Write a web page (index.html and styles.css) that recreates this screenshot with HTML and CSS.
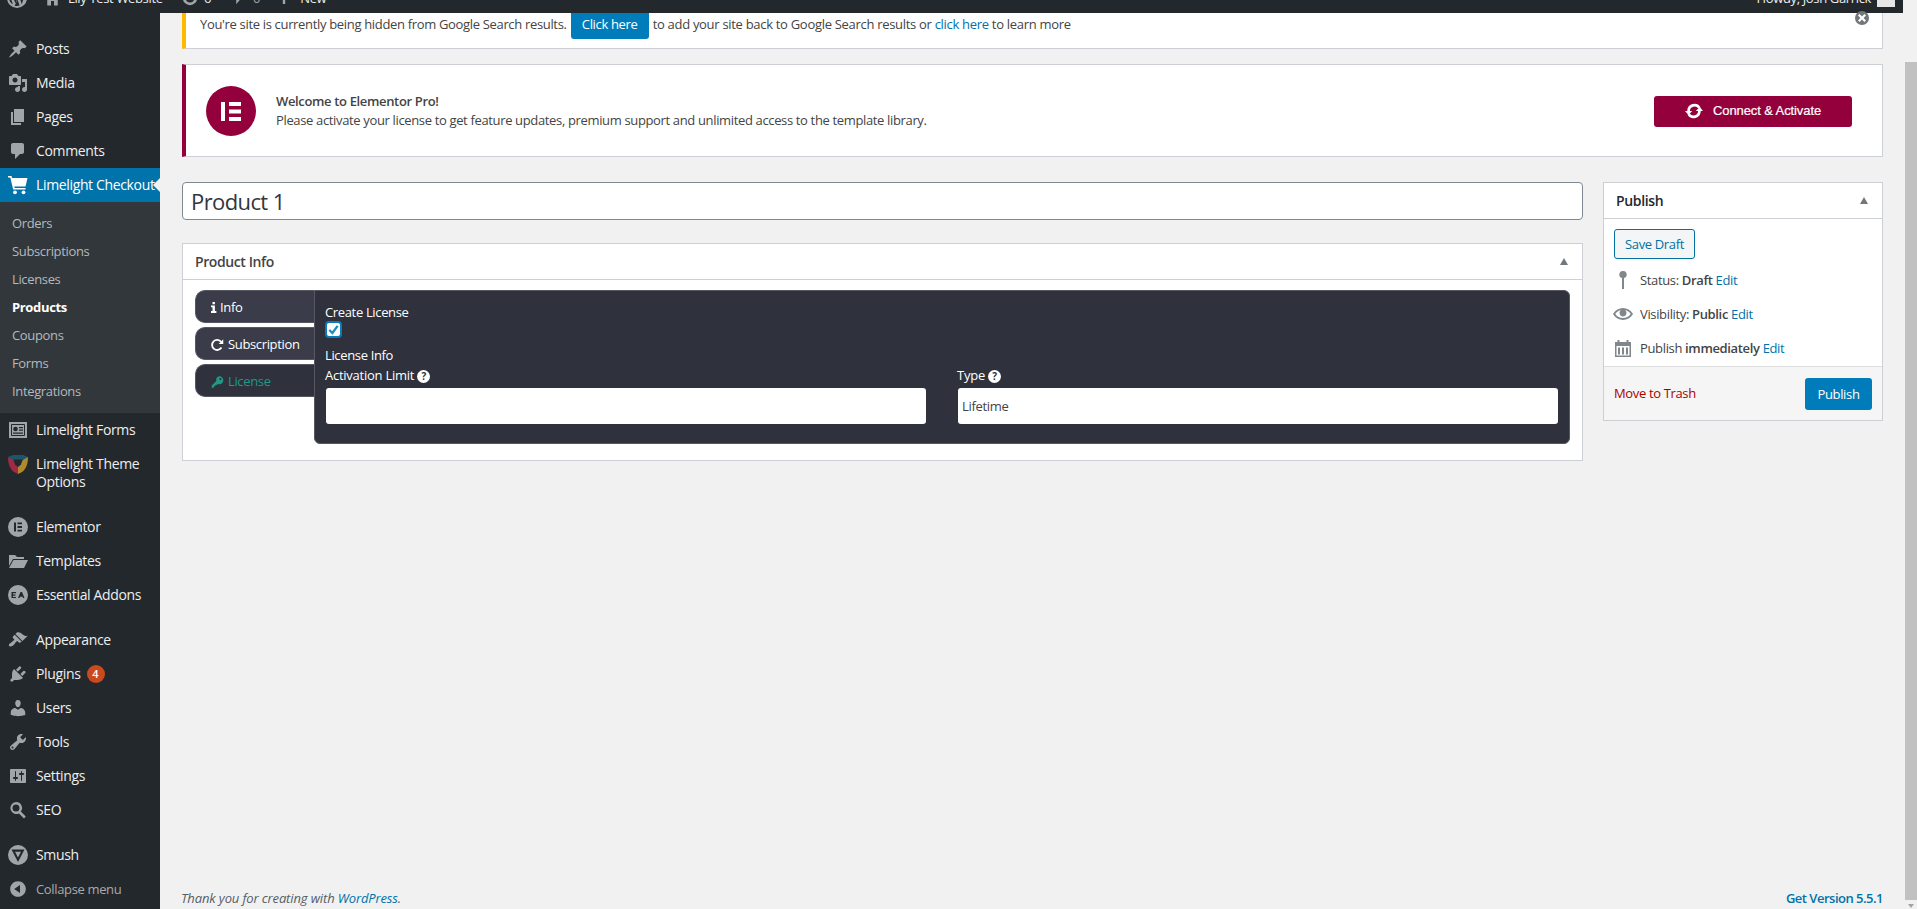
FILE: index.html
```html
<!DOCTYPE html>
<html lang="en">
<head>
<meta charset="utf-8">
<title>Edit Product</title>
<link rel="stylesheet" href="styles.css">
</head>
<body>
<div class="page">
  <header class="adminbar">
    <div class="bar-inner">
      <div class="bar-left">
        <svg class="bar-ico wp" viewBox="0 0 20 20"><path d="M10 0a10 10 0 1 0 0 20 10 10 0 0 0 0-20zm0 1.500c2.300 0 4.400.9 5.900 2.400-1.200 0-2 1-2 2 0 1 .6 1.800 1.200 2.800.5.800 1 1.800 1 3.200l-1.300 4.300-3-9c.5 0 1-.1 1-.1.500 0 .4-.7 0-.7 0 0-1.400.1-2.300.1l-2.300-.1c-.5 0-.5.700 0 .7l.9.100 1.300 3.500-1.800 5.500-3-9c.5 0 1-.1 1-.1.500 0 .4-.7 0-.7L4 6.500C5.500 3.400 7.600 1.500 10 1.500zM2 10c0-1 .2-2 .6-2.900l3.300 9.100C3.600 15 2 12.700 2 10zm8 8c-.8 0-1.500-.1-2.300-.3l2.400-7 2.500 6.800C11.800 17.800 10.900 18 10 18z"/></svg>
        <svg class="bar-ico home" viewBox="0 0 20 20"><path d="M3 20V9L0 9 10 0l10 9h-3v11h-5v-6H8v6z"/></svg>
        <span class="bar-site">Lily Test Website</span>
        <svg class="bar-ico upd" viewBox="0 0 20 20"><path d="M10 2a8 8 0 1 0 8 8h-3a5 5 0 1 1-5-5V2zM12 0l6 4-6 4z"/></svg>
        <span class="bar-count">6</span>
        <svg class="bar-ico cmt" viewBox="0 0 20 20"><path d="M5 0h12c1 0 2 1 2 2v7c0 1-1 2-2 2h-4l-5 6v-6H5c-1 0-2-1-2-2V2c0-1 1-2 2-2z"/></svg>
        <span class="bar-count dim">0</span>
        <svg class="bar-ico plus" viewBox="0 0 20 20"><path d="M8 0h4v20H8z"/></svg>
        <span class="bar-new">New</span>
      </div>
      <div class="bar-right">
        <span>Howdy, Josh Garrick</span>
        <span class="avatar"></span>
      </div>
    </div>
  </header>

  <div class="layout">
    <nav class="sidebar">
      <ul class="menu">
        <li class="mi"><svg class="mi-ico" viewBox="0 0 20 20"><path d="M10.440 3.020l1.820-1.820 6.360 6.350-1.830 1.820c-1.050-.68-2.480-.57-3.410.36l-.75.75c-.92.93-1.040 2.350-.35 3.410l-1.830 1.820-2.410-2.410-2.800 2.790c-.42.42-3.380 2.710-3.800 2.290s1.860-3.390 2.280-3.810l2.790-2.790L4.100 9.360l1.830-1.820c1.050.69 2.480.57 3.400-.36l.75-.75c.93-.92 1.050-2.350.36-3.410z"/></svg><span>Posts</span></li>
        <li class="mi"><svg class="mi-ico" viewBox="0 0 20 20"><path d="M13 11V4c0-.55-.45-1-1-1h-1.670L9 1H5L3.670 3H2c-.55 0-1 .45-1 1v7c0 .55.45 1 1 1h10c.55 0 1-.45 1-1zM7 4.500c1.380 0 2.500 1.120 2.500 2.500S8.380 9.500 7 9.500 4.500 8.380 4.500 7 5.620 4.500 7 4.500zM14 6h5v10.500c0 1.380-1.120 2.500-2.500 2.500S14 17.880 14 16.500s1.120-2.500 2.500-2.500c.17 0 .34.020.5.050V9h-3V6zm-4 8.050V13h2v3.500c0 1.380-1.120 2.500-2.500 2.500S7 17.880 7 16.500 8.120 14 9.500 14c.17 0 .34.020.5.050z"/></svg><span>Media</span></li>
        <li class="mi"><svg class="mi-ico" viewBox="0 0 20 20"><path d="M6 15V2h10v13H6zm-1 1h8v2H3V5h2v11z"/></svg><span>Pages</span></li>
        <li class="mi"><svg class="mi-ico" viewBox="0 0 20 20"><path d="M5 2h9c1.100 0 2 .9 2 2v7c0 1.100-.9 2-2 2h-2l-5 5v-5H5c-1.100 0-2-.9-2-2V4c0-1.100.9-2 2-2z"/></svg><span>Comments</span></li>
        <li class="mi current"><svg class="mi-ico" viewBox="0 0 20 20"><path d="M0 1h3.500l.6 2H19.500l-2 8.500H6.300l.4 1.500H17.500v1.500H5.200L2.300 2.500H0z"/><circle cx="7" cy="17.300" r="1.900"/><circle cx="15.500" cy="17.300" r="1.900"/></svg><span>Limelight Checkout</span></li>
        <li class="sub">
          <a>Orders</a><a>Subscriptions</a><a>Licenses</a><a class="on">Products</a><a>Coupons</a><a>Forms</a><a>Integrations</a>
        </li>
        <li class="mi"><svg class="mi-ico" viewBox="0 0 20 20"><path fill="#a0a5aa" d="M1 2h18v16H1z"/><path fill="none" stroke="#23282d" d="M3.500 4.500h13v11h-13z"/><circle cx="7.500" cy="9" r="2.300" fill="#23282d"/><path fill="#23282d" d="M11 7h4v1.200h-4zM11 9.500h4v1.200h-4zM5 12.500h10v1.200H5z"/></svg><span>Limelight Forms</span></li>
        <li class="mi two sep"><svg class="mi-ico shield" viewBox="0 0 20 20"><path fill="#1d566c" d="M0 3l5-2h10l5 2-5 5H5z"/><path fill="#9e2b45" d="M0 3l5 3 5 7v7C4 18 0 13 0 3z"/><path fill="#b08a2a" d="M20 3l-5 3-5 7v7c6-2 10-7 10-17z"/><path fill="#23282d" d="M5.500 5.500h9L13 10.500l-3 2.500-3-2.500z"/></svg><span>Limelight Theme<br>Options</span></li>
        <li class="mi"><svg class="mi-ico" viewBox="0 0 20 20"><path fill-rule="evenodd" d="M10 0a10 10 0 1 0 0 20 10 10 0 0 0 0-20zM6 5.500h2v9H6zM9.500 5.500H14v1.700H9.500zM9.500 9.100H14v1.800H9.500zM9.500 12.800H14v1.700H9.500z"/></svg><span>Elementor</span></li>
        <li class="mi"><svg class="mi-ico" viewBox="0 0 20 20"><path d="M1 4h6l2 2h7v2H5L1 15zM5.500 9H20l-4 8H1z"/></svg><span>Templates</span></li>
        <li class="mi sep"><svg class="mi-ico" viewBox="0 0 20 20"><path fill-rule="evenodd" d="M10 0a10 10 0 1 0 0 20 10 10 0 0 0 0-20zM3.500 7H8v1.300H5v1.200h2.500v1.200H5v1.200h3V13H3.500zM12.500 7h1.500l2.500 6h-1.500l-.5-1.300H12l-.5 1.300H10z"/></svg><span>Essential Addons</span></li>
        <li class="mi"><svg class="mi-ico" viewBox="0 0 20 20"><path d="M14.480 11.060L7.410 3.990l1.500-1.500c.5-.56 2.300-.47 3.510.32 1.210.8 1.430 1.280 2.910 2.100 1.180.64 2.450 1.260 4.450.85zm-.71.71L6.700 4.700 4.930 6.470c-.39.39-.39 1.020 0 1.410l1.060 1.060c.39.39.39 1.030 0 1.420-.6.6-1.430 1.110-2.210 1.690-.35.26-.7.53-1.010.84C1.430 13.250.4 14.450 1.100 15.900c1.190 1.120 3.310.25 4.750-1.150.37-.37.63-.7.89-1.050.58-.78 1.090-1.610 1.690-2.210.39-.39 1.020-.39 1.410 0l1.060 1.060c.39.39 1.020.39 1.410 0z"/></svg><span>Appearance</span></li>
        <li class="mi"><svg class="mi-ico" viewBox="0 0 20 20"><path d="M13.110 4.360L9.870 7.600 8 5.730l3.240-3.240c.35-.34 1.050-.2 1.560.32.52.51.66 1.210.31 1.550zm-8 1.770l.91-1.120 9.010 9.010-1.190.84c-.71.71-2.630 1.160-3.820 1.160H6.140L4.900 17.260c-.59.59-1.540.59-2.120 0-.59-.58-.59-1.530 0-2.120l1.240-1.240v-3.880c0-1.130.4-3.190 1.090-3.890zm7.260 3.970l3.240-3.240c.34-.35 1.040-.21 1.550.31.52.51.66 1.210.31 1.550l-3.240 3.250z"/></svg><span>Plugins</span><b class="badge">4</b></li>
        <li class="mi"><svg class="mi-ico" viewBox="0 0 20 20"><path d="M10 9.250c-2.270 0-2.730-3.440-2.730-3.440C7 4.020 7.820 2 9.970 2c2.160 0 2.980 2.020 2.710 3.810 0 0-.41 3.440-2.680 3.440zm0 2.570L12.720 10c2.390 0 4.520 2.330 4.520 4.530v2.490s-3.650 1.130-7.240 1.130c-3.650 0-7.240-1.130-7.240-1.130v-2.490c0-2.250 1.940-4.480 4.470-4.480z"/></svg><span>Users</span></li>
        <li class="mi"><svg class="mi-ico" viewBox="0 0 20 20"><path d="M16.680 9.770c-1.340 1.340-3.300 1.670-4.950.99l-5.410 6.520c-.99.99-2.590.99-3.580 0s-.99-2.590 0-3.570l6.520-5.420c-.68-1.650-.35-3.610.99-4.950 1.280-1.280 3.120-1.620 4.720-1.060l-2.890 2.890 2.820 2.820 2.860-2.870c.53 1.580.18 3.390-1.080 4.670zM3.810 16.210c.4.39 1.040.39 1.430 0 .4-.4.4-1.040 0-1.430-.39-.4-1.030-.4-1.430 0-.39.39-.39 1.030 0 1.430z"/></svg><span>Tools</span></li>
        <li class="mi"><svg class="mi-ico" viewBox="0 0 20 20"><path d="M18 16V4c0-.55-.45-1-1-1H3c-.55 0-1 .45-1 1v12c0 .55.45 1 1 1h14c.55 0 1-.45 1-1zM8 11h1c.55 0 1 .45 1 1s-.45 1-1 1H8v1.500c0 .28-.22.5-.5.5s-.5-.22-.5-.5V13H6c-.55 0-1-.45-1-1s.45-1 1-1h1V5.500c0-.28.22-.5.5-.5s.5.22.5.5V11zm5-2h-1c-.55 0-1-.45-1-1s.45-1 1-1h1V5.500c0-.28.22-.5.5-.5s.5.22.5.5V7h1c.55 0 1 .45 1 1s-.45 1-1 1h-1v5.500c0 .28-.22.5-.5.5s-.5-.22-.5-.5V9z"/></svg><span>Settings</span></li>
        <li class="mi sep"><svg class="mi-ico" viewBox="0 0 20 20"><path fill-rule="evenodd" d="M8 2a6 6 0 0 1 4.800 9.600l5 5-1.800 1.800-5-5A6 6 0 1 1 8 2zm0 2.500a3.500 3.500 0 1 0 0 7 3.500 3.500 0 0 0 0-7z"/></svg><span>SEO</span></li>
        <li class="mi"><svg class="mi-ico big" viewBox="0 0 20 20"><path fill-rule="evenodd" d="M10 0a10 10 0 1 0 0 20 10 10 0 0 0 0-20zM3.500 4.500h13L10 17zM7 6.700L10 12.500 13 6.700z"/></svg><span>Smush</span></li>
        <li class="mi collapse"><svg class="mi-ico" viewBox="0 0 20 20"><path d="M10 2.160c4.330 0 7.840 3.510 7.840 7.840s-3.510 7.840-7.840 7.840S2.160 14.330 2.160 10 5.710 2.160 10 2.160zm2 11.720V6.120L6.180 9.970z"/></svg><span>Collapse menu</span></li>
      </ul>
    </nav>

    <main class="main">
      <div class="notice warn">
        <span class="warn-a">You're site is currently being hidden from Google Search results.</span>
        <a class="btn-blue click">Click here</a>
        <span class="warn-b">to add your site back to Google Search results or <a class="lnk">click here</a> to learn more</span>
        <svg class="notice-x" viewBox="0 0 20 20"><path fill="#72777c" fill-rule="evenodd" d="M10 0a10 10 0 1 0 0 20 10 10 0 0 0 0-20zM6.500 4.300L10 7.800l3.500-3.500 2.200 2.200L12.200 10l3.500 3.500-2.200 2.200-3.500-3.500-3.500 3.500-2.200-2.200L7.800 10 4.300 6.500z"/></svg>
      </div>

      <div class="notice promo">
        <svg class="el-logo" viewBox="0 0 50 50"><circle cx="25" cy="25" r="25" fill="#93003c"/><path fill="#fff" d="M15 16h4v19h-4zM23 16h12v4H23zM23 23.500h12v4H23zM23 31h12v4H23z"/></svg>
        <div class="promo-text">
          <strong>Welcome to Elementor Pro!</strong>
          <p>Please activate your license to get feature updates, premium support and unlimited access to the template library.</p>
        </div>
        <a class="connect">
          <svg class="sync" viewBox="0 0 20 20"><path fill="none" stroke="#fff" stroke-width="3" d="M4 10a6.500 6.500 0 0 1 12-3.500M16 10a6.500 6.500 0 0 1-12 3.500"/><path fill="#fff" d="M12 10h8l-3.500-4.500zM0 10h8l-4 4.500z"/></svg>
          Connect &amp; Activate
        </a>
      </div>

      <div class="columns">
        <div class="col-main">
          <input class="title" type="text" value="Product 1" aria-label="Title">
          <section class="box product">
            <div class="box-head"><h2>Product Info</h2><i class="tri"></i></div>
            <div class="product-body">
              <div class="tabs">
                <div class="tab">
                  <svg class="tab-ico" viewBox="0 0 10 18"><path fill="#fff" d="M2.500 0h4v3.500h-4zM0 5.500h6.500V15H9v3H0v-3h2.500V8.500H0z"/></svg>
                  Info
                </div>
                <div class="tab">
                  <svg class="tab-ico wide" viewBox="0 0 18 18"><path fill="none" stroke="#fff" stroke-width="2.600" d="M14.500 12.500A7 7 0 1 1 14 4.500"/><path fill="#fff" d="M17 1v6.500h-6.500z"/></svg>
                  Subscription
                </div>
                <div class="tab active">
                  <svg class="tab-ico wide" viewBox="0 0 18 18"><path fill="#1e9a85" fill-rule="evenodd" d="M11.500 1a5.500 5.500 0 1 1-2 10.600L8 13H6v2H4v2H1v-3l6.400-6.400A5.500 5.500 0 0 1 11.500 1zm1.500 2.500a1.500 1.500 0 1 0 0 3 1.500 1.500 0 0 0 0-3z"/></svg>
                  License
                </div>
              </div>
              <div class="panel">
                <label class="lab">Create License</label>
                <span class="check"><svg viewBox="0 0 14 14"><path fill="none" stroke="#1e8cbe" stroke-width="2.400" d="M2.500 7.500L5.800 10.800 11.500 3"/></svg></span>
                <div class="lab info">License Info</div>
                <div class="fields">
                  <div class="field">
                    <label class="lab">Activation Limit <i class="help">?</i></label>
                    <input class="inp" type="text" aria-label="Activation Limit">
                  </div>
                  <div class="field">
                    <label class="lab">Type <i class="help">?</i></label>
                    <input class="inp" type="text" value="Lifetime" aria-label="Type">
                  </div>
                </div>
              </div>
            </div>
          </section>
        </div>

        <aside class="box publish">
          <div class="box-head"><h2>Publish</h2><i class="tri"></i></div>
          <div class="pub-body">
            <a class="save">Save Draft</a>
            <div class="pub-row"><svg class="pub-ico" viewBox="0 0 20 20"><path fill="#82878c" d="M10 1a3.500 3.500 0 0 1 1 6.900V19H9V7.900A3.500 3.500 0 0 1 10 1z"/></svg><span>Status: <b>Draft</b> <a class="lnk">Edit</a></span></div>
            <div class="pub-row"><svg class="pub-ico" viewBox="0 0 20 20"><path fill="#82878c" d="M19.700 9.400C17.700 6 14 3.900 10 3.900S2.300 6 .3 9.400L0 10l.3.6c2 3.400 5.700 5.500 9.700 5.500s7.700-2.100 9.700-5.500l.3-.6-.3-.6zM10 14.100c-3.100 0-6-1.600-7.700-4.100C3.600 8 5.700 6.600 8 6.100c-.9.6-1.500 1.600-1.500 2.800 0 1.900 1.600 3.500 3.500 3.500s3.500-1.600 3.500-3.500c0-1.200-.6-2.200-1.500-2.800 2.300.5 4.400 1.900 5.700 3.900-1.700 2.500-4.600 4.100-7.700 4.100z"/></svg><span>Visibility: <b>Public</b> <a class="lnk">Edit</a></span></div>
            <div class="pub-row"><svg class="pub-ico" viewBox="0 0 20 20"><path fill="#82878c" fill-rule="evenodd" d="M2 4h2.500V2h2v2h7V2h2v2H18v15H2zM3.500 8v9.500h13V8zM5 9.500h2v7H5zM9 9.500h2v7H9zM13 9.500h2v7h-2z"/></svg><span>Publish <b>immediately</b> <a class="lnk">Edit</a></span></div>
          </div>
          <div class="pub-foot">
            <a class="trash">Move to Trash</a>
            <a class="btn-blue pub">Publish</a>
          </div>
        </aside>
      </div>

      <footer class="foot">
        <span class="thanks">Thank you for creating with <a class="lnk">WordPress</a>.</span>
        <a class="lnk ver">Get Version 5.5.1</a>
      </footer>
    </main>
  </div>
</div>
<div class="scrollbar">
  <div class="thumb"></div>
  <i class="arrow"></i>
</div>
</body>
</html>
```
FILE: styles.css
```css
* { box-sizing: border-box; }
html, body { height: 100%; }
body {
  margin: 0;
  display: flex;
  height: 909px;
  overflow: hidden;
  background: #f1f1f1;
  color: #444;
  font: 13px/1.4 "Open Sans", "Noto Sans", sans-serif;
  letter-spacing: -.35px;
}
a { text-decoration: none; }
h2, p, ul { margin: 0; padding: 0; }
ul { list-style: none; }
.lnk { color: #0073aa; }

.page { width: 1905px; display: flex; flex-direction: column; }

/* admin bar, scrolled so only its lower part shows */
.adminbar { height: 13px; flex: none; margin-right: 2px; background: #23282d; overflow: hidden; color: #eee; }
.bar-inner { height: 32px; margin-top: -18px; padding: 0 8px 0 7px; display: flex; align-items: center; justify-content: space-between; }
.bar-left, .bar-right { display: flex; align-items: center; }
.bar-ico { fill: #a0a5aa; flex: none; }
.bar-ico.wp { width: 20px; height: 20px; }
.bar-ico.home { width: 15px; height: 20px; margin-left: 18px; }
.bar-site { margin-left: 8px; width: 113px; white-space: nowrap; }
.bar-ico.upd { width: 18px; height: 20px; }
.bar-count { margin-left: 5px; }
.bar-count.dim { color: #a0a5aa; margin-left: 6px; }
.bar-ico.cmt { width: 18px; height: 20px; margin-left: 18px; }
.bar-ico.plus { width: 12px; height: 20px; margin-left: 18px; }
.bar-new { margin-left: 10px; }
.avatar { width: 18px; height: 18px; margin-left: 6px; background: #e6e6e6; }

.layout { flex: 1; min-height: 0; display: flex; }

/* sidebar */
.sidebar { width: 160px; flex: none; padding-top: 19px; background: #23282d; }
.mi { position: relative; min-height: 34px; display: flex; align-items: center; color: #eee; font-size: 14px; line-height: 18px; white-space: nowrap; }
.mi > span { margin-left: 36px; }
.mi-ico { position: absolute; left: 8px; top: 7px; width: 20px; height: 20px; fill: #a0a5aa; }
.mi.sep { margin-bottom: 11px; }
.mi.two { min-height: 52px; align-items: flex-start; padding-top: 8px; }
.mi.current { background: #0073aa; color: #fff; }
.mi.current .mi-ico { fill: #fff; }
.mi.current::after { content: ""; position: absolute; right: 0; top: 10px; border: 7px solid transparent; border-left-width: 0; border-right-color: #f1f1f1; }
.sub { padding: 7px 0 8px; background: #32373c; }
.sub a { display: block; height: 28px; padding-left: 12px; line-height: 28px; color: #b4b9be; }
.sub a.on { color: #fff; font-weight: 700; }
.badge { margin-left: 6px; width: 18px; height: 18px; border-radius: 50%; background: #ca4a1f; color: #fff; font: 600 11px/18px "Open Sans", sans-serif; text-align: center; letter-spacing: 0; }
.collapse { color: #aaa; font-size: 13px; }

/* main */
.main { flex: 1; min-width: 0; padding: 0 22px 0 22px; display: flex; flex-direction: column; }
.notice { background: #fff; border: 1px solid #ccd0d4; border-left-width: 4px; }
.warn { position: relative; height: 36px; padding-left: 14px; border-top: 0; border-left-color: #ffb900; display: flex; align-items: flex-start; white-space: nowrap; line-height: 22px; }
.warn-a { letter-spacing: -.33px; }
.warn-b { letter-spacing: -.3px; }
.btn-blue { background: #007cba; color: #fff; text-align: center; border-radius: 3px; }
.click { width: 78px; height: 26px; margin: 0 4px; line-height: 22px; font-size: 13px; border-radius: 0 0 3px 3px; }
.notice-x { position: absolute; right: 13px; top: -2px; width: 14px; height: 14px; }
.promo { height: 93px; margin-top: 15px; border-left-color: #93003c; display: flex; align-items: center; padding: 0 30px 0 20px; }
.el-logo { width: 50px; height: 50px; flex: none; }
.promo-text { margin-left: 20px; line-height: 19px; flex: 1; }
.promo-text strong { font-weight: 600; }
.connect { width: 198px; height: 31px; margin-top: 2px; padding: 0 0 2px 31px; background: #93003c; color: #fff; border-radius: 3px; display: flex; align-items: center; font: 13px/27px "Liberation Sans", Arial, sans-serif; letter-spacing: -.1px; -webkit-text-stroke: .2px #fff; }
.sync { width: 18px; height: 18px; margin-right: 10px; }

.columns { margin-top: 25px; display: flex; gap: 20px; align-items: flex-start; }
.col-main { flex: 1; min-width: 0; }
.title { display: block; width: 100%; height: 38px; padding: 0 8px; border: 1px solid #7e8993; border-radius: 4px; background: #fff; color: #32373c; font: 22px/1.3 "Open Sans", sans-serif; letter-spacing: -.6px; outline: 0; }
.box { background: #fff; border: 1px solid #ccd0d4; }
.box-head { height: 36px; padding: 0 12px; display: flex; align-items: center; justify-content: space-between; border-bottom: 1px solid #ccd0d4; }
.box-head h2 { font-size: 14px; font-weight: 600; color: #23282d; }
.tri { width: 0; height: 0; margin-right: 2px; border: 4.500px solid transparent; border-top-width: 0; border-bottom: 7px solid #72777c; }

.product { margin-top: 23px; height: 218px; }
.product .box-head h2 { color: #444; letter-spacing: -.4px; }
.product-body { padding: 10px 12px 0 12px; display: flex; }
.tabs { width: 119px; flex: none; display: flex; flex-direction: column; gap: 4px; }
.tab { height: 33px; padding: 2px 0 0 15px; display: flex; align-items: center; background: #3a3c49; border: 1px solid #555762; border-right: 0; border-radius: 10px 0 0 10px; color: #fff; white-space: nowrap; }
.tab.active { background: #2f313d; color: #1e9a85; }
.tab-ico { width: 6px; height: 13px; margin-right: 3px; flex: none; }
.tab-ico.wide { width: 13px; height: 14px; margin-right: 4px; }
.panel { flex: 1; height: 154px; padding: 12px 11px 0 11px; background: #2f313d; border: 1px solid #555762; border-radius: 0 6px 6px 6px; color: #fff; }
.lab { display: block; line-height: 18px; margin-left: -1px; }
.field .lab { letter-spacing: -.25px; }
.check { display: flex; align-items: center; justify-content: center; width: 17px; height: 17px; margin-left: -1px; background: #fff; border: 2px solid #0b7cb8; border-radius: 4px; }
.check svg { width: 13px; height: 13px; }
.info { margin-top: 8px; }
.fields { margin-top: 2px; display: flex; gap: 32px; }
.field { flex: 1; }
.help { display: inline-block; width: 13px; height: 13px; border-radius: 50%; background: #fff; color: #2f313d; font: 700 10px/13px "Open Sans", sans-serif; text-align: center; letter-spacing: 0; vertical-align: 0; }
.inp { display: block; width: 100%; height: 36px; padding: 0 4px; margin-top: 4px; border: 0; border-radius: 3px; background: #fff; color: #444; font: 13px "Open Sans", sans-serif; letter-spacing: -.32px; outline: 0; }

.publish { width: 280px; flex: none; height: 239px; display: flex; flex-direction: column; }
.publish .box-head h2 { padding-top: 1px; }
.pub-body { flex: 1; padding: 10px 10px 0; }
.save { display: block; width: 81px; height: 30px; border: 1px solid #0071a1; border-radius: 3px; background: #f3f5f6; color: #0071a1; line-height: 28px; text-align: center; }
.pub-row { position: relative; height: 34px; padding-left: 26px; display: flex; align-items: center; white-space: nowrap; }
.pub-row:first-of-type { margin-top: 4px; }
.pub-row b { font-weight: 600; }
.pub-ico { position: absolute; left: -1px; top: 7px; width: 20px; height: 20px; }
.pub-foot { height: 54px; padding: 0 10px; display: flex; align-items: center; justify-content: space-between; background: #f5f5f5; border-top: 1px solid #ddd; }
.trash { color: #a00; }
.pub { width: 67px; height: 32px; line-height: 32px; }

.foot { margin-top: auto; height: 20px; display: flex; justify-content: space-between; align-items: flex-start; color: #555d66; }
.thanks { font-style: italic; margin-left: -1px; letter-spacing: -.13px; }
.ver { font-weight: 600; letter-spacing: -.5px; }

/* browser scrollbar */
.scrollbar { width: 12px; flex: none; padding-top: 62px; display: flex; flex-direction: column; align-items: center; }
.thumb { width: 100%; height: 838px; background: #c1c1c1; }
.arrow { margin-top: 4px; width: 0; height: 0; border: 3.500px solid transparent; border-bottom-width: 0; border-top: 4px solid #a3a3a3; }
```
